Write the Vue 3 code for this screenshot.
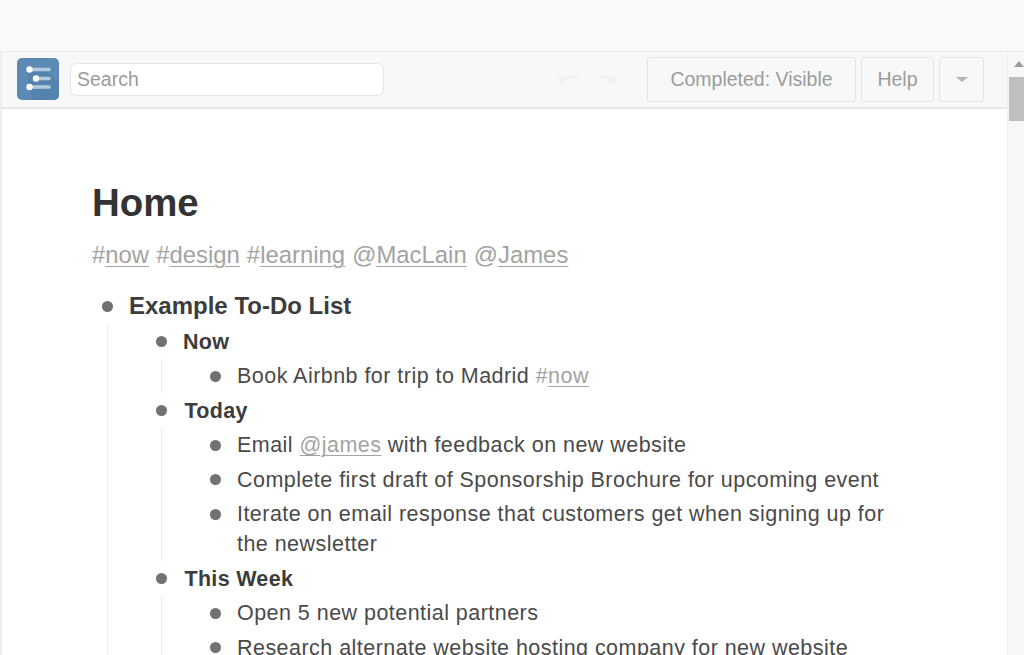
<script setup>
const tags = [
  { p: '#', t: 'now' },
  { p: '#', t: 'design' },
  { p: '#', t: 'learning' },
  { p: '@', t: 'MacLain' },
  { p: '@', t: 'James' }
]
</script>

<template>
  <div class="page">
    <div class="band"></div>
    <div class="main">
      <div class="pane">
        <div class="toolbar">
          <div class="logo">
            <svg width="42" height="42" viewBox="0 0 42 42">
              <path d="M16 42 L11 30 L11 12 L30 12 L42 26 L42 38 Q42 42 38 42 Z" fill="#5484ad" />
              <g stroke="#b4cade" stroke-width="3.6" stroke-linecap="round">
                <path d="M13 11.5 H32" />
                <path d="M19 20.5 H32" />
                <path d="M13 29 H32" />
              </g>
              <g fill="#fff">
                <circle cx="12.5" cy="11.5" r="3.2" />
                <circle cx="19" cy="20.5" r="3.2" />
                <circle cx="12.5" cy="29" r="3.2" />
              </g>
            </svg>
          </div>
          <div class="search">Search</div>
          <div class="history">
            <svg width="22" height="14" viewBox="0 0 22 14"><path d="M1 12 L2 5 L5 6.5 Q12 1 21 5 L21 7 Q12 4 8 9 L10 11 Z" fill="#f1f1f1" /></svg>
            <svg width="22" height="14" viewBox="0 0 22 14"><path d="M21 12 L20 5 L17 6.5 Q10 1 1 5 L1 7 Q10 4 14 9 L12 11 Z" fill="#f1f1f1" /></svg>
          </div>
          <div class="btn completed">Completed: Visible</div>
          <div class="btn help">Help</div>
          <div class="btn caret"><span class="tri"></span></div>
        </div>
        <div class="content">
          <h1 class="title">Home</h1>
          <div class="tags">
            <span v-for="tag in tags" :key="tag.t" class="tag">{{ tag.p }}<u>{{ tag.t }}</u></span>
          </div>
          <div class="row top"><span class="dot"></span><b>Example To-Do List</b></div>
          <div class="kids outer">
            <div class="row"><span class="dot"></span><b>Now</b></div>
            <div class="kids">
              <div class="row"><span class="dot"></span><span>Book Airbnb for trip to Madrid <span class="tag">#<u>now</u></span></span></div>
            </div>
            <div class="row"><span class="dot"></span><b class="nudge">Today</b></div>
            <div class="kids">
              <div class="row"><span class="dot"></span><span>Email <span class="tag"><u>@james</u></span> with feedback on new website</span></div>
              <div class="row"><span class="dot"></span><span>Complete first draft of Sponsorship Brochure for upcoming event</span></div>
              <div class="row"><span class="dot"></span><span>Iterate on email response that customers get when signing up for the newsletter</span></div>
            </div>
            <div class="row"><span class="dot"></span><b class="nudge">This Week</b></div>
            <div class="kids">
              <div class="row"><span class="dot"></span><span>Open 5 new potential partners</span></div>
              <div class="row"><span class="dot"></span><span>Research alternate website hosting company for new website</span></div>
            </div>
          </div>
        </div>
      </div>
      <div class="scrollbar">
        <span class="up"></span>
        <div class="thumb"></div>
      </div>
    </div>
  </div>
</template>

<style>
html, body { margin: 0; overflow: hidden; }
</style>

<style scoped>
.page {
  width: 1024px;
  height: 655px;
  overflow: hidden;
  display: flex;
  flex-direction: column;
  background: #fff;
  font-family: "Liberation Sans", Arial, sans-serif;
  color: #4a4a4a;
}
.band { flex: none; background: #f9f9f9; border-bottom: 2px solid #e9e9e9; box-sizing: border-box; height: 53px; margin-bottom: -1px; }
.main { flex: 1; display: flex; min-height: 0; border-left: 2px solid #eee; }
.pane { flex: 1; min-width: 0; border-right: 1px solid #eee; }
.toolbar {
  height: 57px;
  box-sizing: border-box;
  background: #f8f8f8;
  border-bottom: 2px solid #e6e6e6;
  display: flex;
  align-items: center;
  padding: 0 23px 1px 15px;
}
.logo { width: 42px; height: 42px; border-radius: 5px; background: #5b8bb5; overflow: hidden; flex: none; }
.logo svg { display: block; }
.search {
  margin-left: 11px;
  width: 314px;
  height: 33px;
  box-sizing: border-box;
  background: #fff;
  border: 1px solid #e6e6e6;
  border-radius: 7px;
  color: #9b9b9b;
  font-size: 19.5px;
  line-height: 31px;
  padding-left: 6px;
}
.history { margin-left: auto; margin-right: 29px; display: flex; gap: 17px; }
.btn {
  height: 45px;
  box-sizing: border-box;
  border: 1px solid #e4e4e4;
  border-radius: 3px;
  color: #9c9c9c;
  font-size: 19.5px;
  display: flex;
  align-items: center;
  justify-content: center;
  margin-left: 5px;
  background: #f8f8f8;
}
.completed { width: 209px; margin-left: 0; }
.help { width: 73px; }
.caret { width: 45px; }
.tri { width: 0; height: 0; border-left: 6px solid transparent; border-right: 6px solid transparent; border-top: 5px solid #b5b5b5; }
.content {
  padding: 72px 107px 0 90px;
}
.title { margin: 0; font-size: 38.4px; line-height: 44px; font-weight: 700; color: #333; }
.tags { margin-top: 12px; font-size: 23.9px; line-height: 36px; margin-bottom: 16px; }
.tag { color: #a3a3a3; }
.tags .tag + .tag { margin-left: 7px; }
u { text-decoration: underline; text-underline-offset: 3px; text-decoration-thickness: 1px; }
.row {
  display: flex;
  font-size: 21.5px;
  letter-spacing: 0.46px;
  line-height: 30px;
  padding: 2.25px 0;
}
.row b { font-weight: 700; color: #3c3c3c; letter-spacing: 0.3px; }
.row b.nudge { padding-left: 1.5px; }
.row.top b { font-size: 24px; letter-spacing: 0; }
.dot {
  flex: none;
  width: 37px;
  height: 30px;
  position: relative;
}
.dot::before {
  content: "";
  position: absolute;
  left: 10px;
  top: 9.5px;
  width: 11px;
  height: 11px;
  border-radius: 50%;
  background: #717171;
}
.kids {
  margin-left: 15px;
  padding-left: 38px;
  border-left: 1px solid #ececec;
}
.kids.outer { margin-top: 1px; }
.scrollbar {
  width: 16px;
  flex: none;
  background: #f7f7f7;
  display: flex;
  flex-direction: column;
  align-items: flex-start;
  padding: 9px 0 0 1px;
  box-sizing: border-box;
}
.up { margin-left: 5px; width: 0; height: 0; border-left: 5.5px solid transparent; border-right: 5.5px solid transparent; border-bottom: 6px solid #9a9a9a; }
.thumb { margin-top: 10px; width: 15px; height: 44px; background: #bfbfbf; }
</style>
